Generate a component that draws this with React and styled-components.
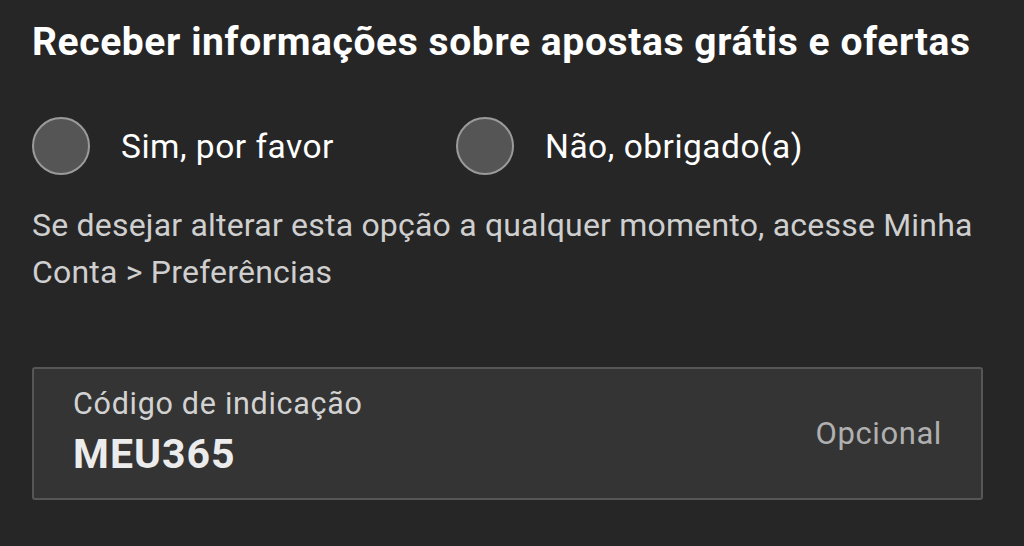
import React from "react";
import styled, { createGlobalStyle } from "styled-components";

const GlobalStyle = createGlobalStyle`
  html, body {
    margin: 0;
    padding: 0;
    background: #262626;
  }
  body {
    font-family: Roboto, "Liberation Sans", sans-serif;
    color: #fff;
  }
`;

const Page = styled.div`
  width: 1024px;
  height: 546px;
  box-sizing: border-box;
  padding: 18px 41px 0 32px;
  overflow: hidden;
`;

const Title = styled.h2`
  margin: 0;
  font-size: 39px;
  font-weight: 700;
  line-height: 48px;
  letter-spacing: 0.6px;
  color: #fff;
  white-space: nowrap;
`;

const Options = styled.div`
  display: flex;
  margin-top: 51px;
`;

const Option = styled.label`
  display: flex;
  align-items: center;
  gap: 31px;
  width: 424px;
  cursor: pointer;
`;

const Circle = styled.span`
  width: 58px;
  height: 58px;
  box-sizing: border-box;
  border-radius: 50%;
  border: 2px solid #9a9a9a;
  background: #555;
  flex-shrink: 0;
`;

const OptionText = styled.span`
  font-size: 33.5px;
  letter-spacing: 0.5px;
  color: #fff;
`;

const Note = styled.p`
  margin: 27px 0 0;
  font-size: 32px;
  line-height: 47px;
  letter-spacing: 0.2px;
  color: #cfcfcf;
`;

const Field = styled.div`
  margin-top: 71px;
  height: 133px;
  box-sizing: border-box;
  border: 2px solid #565656;
  border-radius: 3px;
  background: #343434;
  display: flex;
  align-items: center;
  justify-content: space-between;
  padding: 0 39px 0 39px;
`;

const FieldBody = styled.div`
  display: flex;
  flex-direction: column;
  gap: 10px;
`;

const FieldLabel = styled.span`
  font-size: 30.5px;
  line-height: 30px;
  letter-spacing: 0.7px;
  color: #d2d2d2;
`;

const FieldValue = styled.span`
  font-size: 41px;
  font-weight: 700;
  line-height: 50px;
  letter-spacing: 1px;
  color: #ececec;
`;

const Hint = styled.span`
  font-size: 31px;
  letter-spacing: 0.6px;
  color: #b0b0b0;
`;

const App = () => {
  return (
    <>
      <GlobalStyle />
      <Page>
        <Title>Receber informações sobre apostas grátis e ofertas</Title>
        <Options>
          <Option>
            <Circle />
            <OptionText>Sim, por favor</OptionText>
          </Option>
          <Option>
            <Circle />
            <OptionText>Não, obrigado(a)</OptionText>
          </Option>
        </Options>
        <Note>
          Se desejar alterar esta opção a qualquer momento, acesse Minha Conta
          &gt; Preferências
        </Note>
        <Field>
          <FieldBody>
            <FieldLabel>Código de indicação</FieldLabel>
            <FieldValue>MEU365</FieldValue>
          </FieldBody>
          <Hint>Opcional</Hint>
        </Field>
      </Page>
    </>
  );
};

export default App;
